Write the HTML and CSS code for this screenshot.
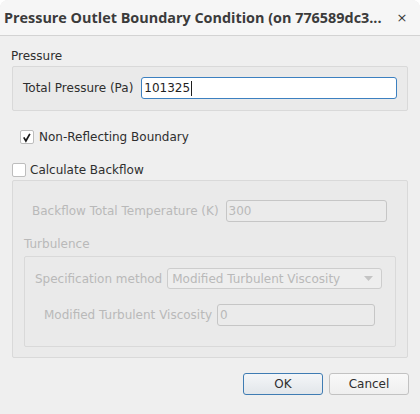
FILE: index.html
```html
<!DOCTYPE html>
<html>
<head>
<meta charset="utf-8">
<link rel="stylesheet" href="styles.css">
</head>
<body>
<div class="window">
  <div class="titlebar">
    <span class="title">Pressure Outlet Boundary Condition (on 776589dc3...</span>
    <span class="close">×</span>
  </div>
  <div class="content">
    <div class="section-label">Pressure</div>
    <div class="group group-pressure">
      <div class="row">
        <span class="label">Total Pressure (Pa)</span>
        <div class="input focused input-pressure">101325<span class="caret"></span></div>
      </div>
    </div>
    <label class="check check-nrb">
      <span class="box"><svg width="13" height="13" viewBox="0 0 13 13"><path d="M3 6.4 L5.3 10.2 L9.6 2.6" fill="none" stroke="#1a1a1a" stroke-width="1.9"/></svg></span>
      <span class="check-text">Non-Reflecting Boundary</span>
    </label>
    <label class="check check-bf">
      <span class="box"></span>
      <span class="check-text">Calculate Backflow</span>
    </label>
    <div class="group group-backflow disabled">
      <div class="row row-temp">
        <span class="label">Backflow Total Temperature (K)</span>
        <div class="input input-temp">300</div>
      </div>
      <div class="sub-label">Turbulence</div>
      <div class="group group-turb">
        <div class="row row-spec">
          <span class="label">Specification method</span>
          <div class="combo">
            <span>Modified Turbulent Viscosity</span>
            <svg width="9" height="5" viewBox="0 0 9 5"><path d="M0 0 L9 0 L4.5 5 Z" fill="#c4c4c4"/></svg>
          </div>
        </div>
        <div class="row row-visc">
          <span class="label">Modified Turbulent Viscosity</span>
          <div class="input input-visc">0</div>
        </div>
      </div>
    </div>
    <div class="buttons">
      <button class="btn btn-ok">OK</button>
      <button class="btn btn-cancel">Cancel</button>
    </div>
  </div>
</div>
</body>
</html>
```
FILE: styles.css
```css
html, body {
  margin: 0;
  padding: 0;
  background: #ffffff;
}
body {
  font-family: "DejaVu Sans", sans-serif;
  font-size: 12px;
  color: #2e2e2e;
}
.window {
  width: 420px;
  height: 414px;
  background: #efefef;
  border-radius: 8px 8px 0 0;
  overflow: hidden;
  display: flex;
  flex-direction: column;
}
.titlebar {
  height: 36px;
  box-sizing: border-box;
  border-bottom: 1px solid #d3d3d3;
  background: #f6f6f6;
  border-radius: 8px 8px 0 0;
  display: flex;
  align-items: center;
  padding-left: 4px;
}
.title {
  font-family: "Open Sans", sans-serif;
  font-weight: 700;
  font-size: 14.4px;
  color: #3b3b3b;
  flex: 1;
  white-space: nowrap;
}
.close {
  width: 16px;
  margin-right: 10px;
  font-size: 13px;
  color: #3b3b3b;
  text-align: center;
}
.content {
  flex: 1;
  display: flex;
  flex-direction: column;
  padding: 0 12px 0 12px;
}
.section-label {
  margin-left: -1px;
  height: 18px;
  margin-top: 11px;
  line-height: 18px;
  color: #2e2e2e;
}
.group {
  border: 1px solid #d9d9d9;
  border-radius: 2px;
  background: #eaeaea;
  box-sizing: border-box;
}
.group-pressure {
  margin-top: 1px;
  height: 45px;
  padding: 10px 10px 0 10px;
}
.row {
  display: flex;
  align-items: center;
}
.label {
  white-space: nowrap;
}
.input {
  box-sizing: border-box;
  height: 22px;
  border: 1px solid #b8b8b8;
  border-radius: 3px;
  background: #ffffff;
  padding: 0 2px;
  line-height: 20px;
  display: flex;
  align-items: center;
}
.input-pressure {
  margin-left: 8px;
  width: 257px;
  color: #1e1e1e;
}
.focused {
  border-color: #3c80c0;
}
.caret {
  display: inline-block;
  width: 1px;
  height: 15px;
  background: #1e1e1e;
  margin-left: 1px;
}
.check {
  display: flex;
  align-items: center;
  height: 14px;
}
.box {
  width: 14px;
  height: 14px;
  box-sizing: border-box;
  border: 1px solid #bdbdbd;
  border-radius: 2px;
  background: #ffffff;
  display: flex;
  align-items: center;
  justify-content: center;
}
.box svg {
  display: block;
}
.check-nrb {
  margin-top: 19px;
  margin-left: 8px;
}
.check-nrb .check-text {
  margin-left: 5px;
}
.check-bf {
  margin-top: 19px;
}
.check-bf .check-text {
  margin-left: 4px;
}
.group-backflow {
  margin-top: 3px;
  height: 178px;
  padding: 19px 11px 0 11px;
}
.disabled, .disabled .input, .disabled .combo {
  color: #b9b9b9;
}
.disabled .input {
  background: #ebebeb;
  border-color: #c6c6c6;
}
.row-temp {
  padding-left: 8px;
}
.input-temp {
  margin-left: 7px;
  width: 161px;
}
.sub-label {
  margin-top: 13px;
  height: 18px;
  line-height: 18px;
}
.group-turb {
  margin-top: 3px;
  height: 91px;
  padding: 11px 11px 0 10px;
}
.combo {
  box-sizing: border-box;
  margin-left: 5px;
  width: 215px;
  height: 21px;
  border: 1px solid #cdcdcd;
  border-radius: 3px;
  background: #eeeeee;
  display: flex;
  align-items: center;
  justify-content: space-between;
  padding: 0 8px 0 4px;
}
.row-visc {
  margin-top: 15px;
  padding-left: 9px;
}
.input-visc {
  margin-left: 5px;
  width: 158px;
}
.buttons {
  margin-top: 15px;
  display: flex;
  justify-content: flex-end;
  gap: 6px;
  margin-right: -1px;
}
.btn {
  font-family: "DejaVu Sans", sans-serif;
  font-size: 12px;
  color: #2e2e2e;
  width: 80px;
  height: 22px;
  border-radius: 3px;
  padding: 0;
  box-sizing: border-box;
}
.btn-ok {
  border: 1px solid #3f7cb3;
  background: linear-gradient(#f4f6f8, #e2e6ea);
}
.btn-cancel {
  border: 1px solid #c2c2c2;
  background: linear-gradient(#f9f9f9, #efefef);
}
```
